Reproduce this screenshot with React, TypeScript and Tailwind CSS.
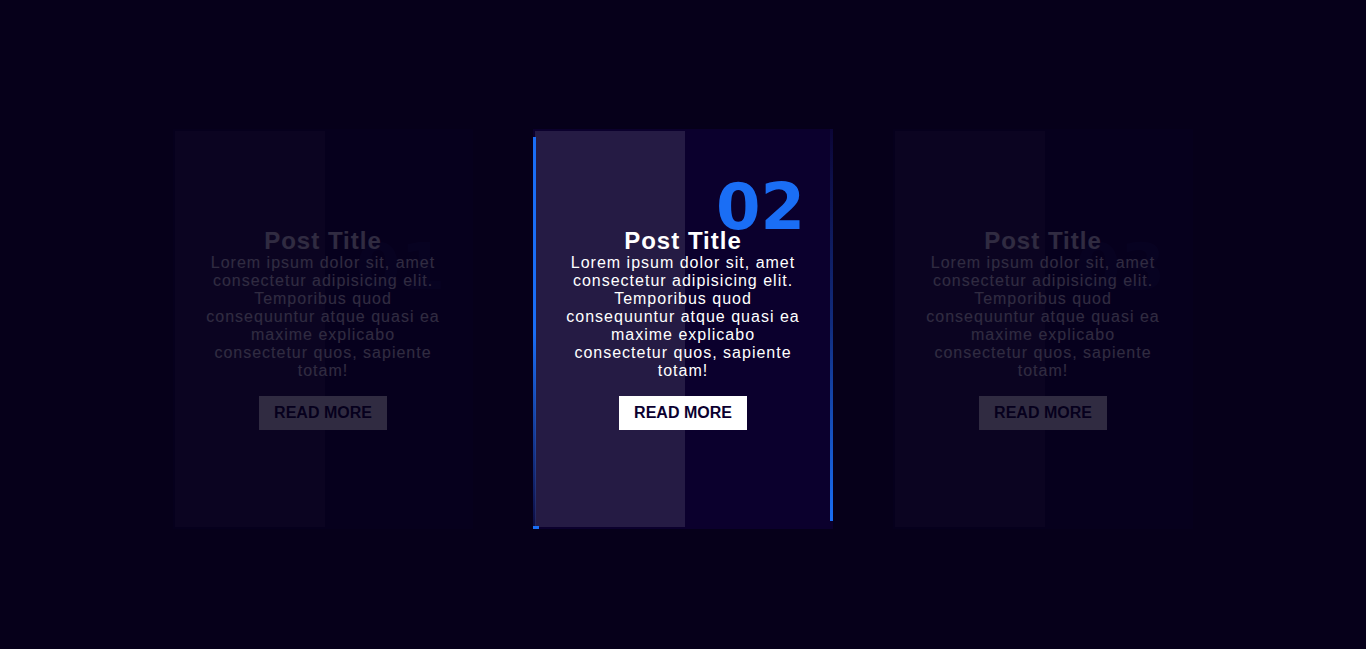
const posts = [
  { num: '01', active: false },
  { num: '02', active: true },
  { num: '03', active: false },
]

function PostCard({ num, active }: { num: string; active: boolean }) {
  return (
    <div
      className={`relative w-[300px] h-[400px] bg-[#0b002d] ${active ? '' : 'opacity-[0.17]'}`}
    >
      {/* light half */}
      <div className="absolute left-[2px] top-[2px] bottom-[2px] w-[150px] bg-[#251b44]" />

      {active ? (
        <>
          {/* animated border lines */}
          <span className="absolute left-0 top-[8px] bottom-0 w-[3px] bg-gradient-to-b from-[#1a6ef5] via-[#1a6ef5] to-[#1a6ef5]/10" />
          <span className="absolute left-0 bottom-0 w-[6px] h-[3px] bg-[#1a6ef5]" />
          <span className="absolute right-0 top-0 bottom-[8px] w-[3px] bg-gradient-to-b from-[#1a6ef5]/5 via-[#1a6ef5]/40 to-[#1a6ef5]" />
        </>
      ) : null}

      <span
        className={`absolute right-[28px] leading-none text-[64px] font-bold text-[#1a6ef5] [font-family:'DejaVu_Sans',sans-serif] ${
          active ? 'top-[46px]' : 'top-[106px] opacity-[0.12]'
        }`}
      >
        {num}
      </span>

      <div className="relative h-full flex flex-col items-center justify-center px-[30px] text-center text-white tracking-[1px] [font-family:'Liberation_Sans',Arial,sans-serif]">
        <h2 className="text-[24px] font-bold leading-[26px]">Post Title</h2>
        <p className="text-[16px] leading-[18px]">
          Lorem ipsum dolor sit, amet consectetur adipisicing elit. Temporibus quod consequuntur atque quasi ea
          maxime explicabo consectetur quos, sapiente totam!
        </p>
        <a className="mt-4 bg-white px-[15px] py-2 text-[16px] leading-[18px] font-bold tracking-normal text-[#0b0030]">
          READ MORE
        </a>
      </div>
    </div>
  )
}

export default function App() {
  return (
    <div className="min-h-screen bg-[#06001a] flex justify-center pt-[129px]">
      <div className="flex gap-[60px] h-[400px]">
        {posts.map((p) => (
          <PostCard key={p.num} num={p.num} active={p.active} />
        ))}
      </div>
    </div>
  )
}
